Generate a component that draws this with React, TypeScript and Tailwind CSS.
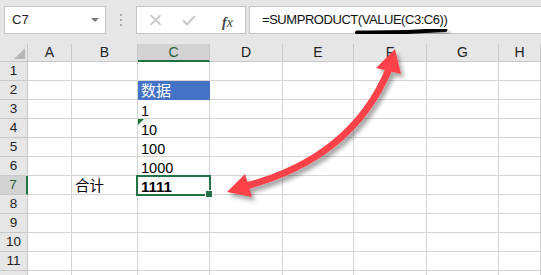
import React from 'react';

const cols = ['A', 'B', 'C', 'D', 'E', 'F', 'G', 'H'];
const rows = [1, 2, 3, 4, 5, 6, 7, 8, 9, 10, 11, 12];

type CellProps = { row: number; col: string };

function Cell({ row, col }: CellProps) {
  const base = 'relative flex items-end leading-none border-r border-b border-[#d4d4d4] px-[3px] text-[14.5px] text-black';

  if (col === 'C' && row === 2) {
    return (
      <div className="relative flex items-end leading-none border-r border-b border-[#4472c4] bg-[#4472c4] px-[3px] pb-[1px] text-[15px] text-white">
        数据
      </div>
    );
  }
  if (col === 'C' && row === 3) return <div className={base}>1</div>;
  if (col === 'C' && row === 4) {
    return (
      <div className={base}>
        <span className="absolute left-0 top-0 w-0 h-0 border-t-[6px] border-r-[6px] border-t-[#1e7b34] border-r-transparent" />
        10
      </div>
    );
  }
  if (col === 'C' && row === 5) return <div className={base}>100</div>;
  if (col === 'C' && row === 6) return <div className={base}>1000</div>;
  if (col === 'C' && row === 7) {
    return (
      <div className={`${base} z-10 font-bold text-[15px]`}>
        1111
        <span className="absolute -left-[2px] -top-[1px] -right-[2px] -bottom-[2px] border-2 border-[#217346]" />
        <span className="absolute -right-[4px] -bottom-[4px] w-[8px] h-[8px] bg-[#217346] border border-white" />
      </div>
    );
  }
  if (col === 'B' && row === 7) {
    return <div className={`${base} pb-[1px] text-[14.5px]`}>合计</div>;
  }
  return <div className={base} />;
}

export default function App() {
  return (
    <div
      className="relative w-[541px] h-[275px] overflow-hidden bg-white"
      style={{ fontFamily: '"Liberation Sans", "Noto Sans CJK SC", sans-serif' }}
    >
      {/* formula bar */}
      <div className="flex items-start h-[44px] bg-[#e6e6e6] pt-[6px]">
        <div className="ml-[4px] w-[102px] h-[28px] bg-white border border-[#c6c6c6] flex items-center justify-between pl-[7px] pr-[6px]">
          <span className="text-[13px] text-[#222]">C7</span>
          <span className="w-0 h-0 border-l-[4px] border-r-[4px] border-t-[4px] border-l-transparent border-r-transparent border-t-[#7a7a7a]" />
        </div>
        <div className="w-[30px] h-[28px] flex flex-col items-center justify-center gap-[3px]">
          <span className="w-[2px] h-[2px] bg-[#a8a8a8]" />
          <span className="w-[2px] h-[2px] bg-[#a8a8a8]" />
          <span className="w-[2px] h-[2px] bg-[#a8a8a8]" />
        </div>
        <div className="relative w-[110px] h-[28px] bg-white border border-[#c6c6c6] flex items-center">
          <svg width="110" height="26" viewBox="0 0 110 26">
            <path d="M14 8 L24 18 M24 8 L14 18" stroke="#c4c4c4" strokeWidth="1.6" fill="none" />
            <path d="M47 13.5 L51 17.5 L59 9" stroke="#c4c4c4" strokeWidth="2" fill="none" />
          </svg>
          <span
            className="absolute left-[85px] top-[5px] text-[14px] italic text-[#444]"
            style={{ fontFamily: '"Liberation Serif", serif' }}
          >
            <span className="font-bold">f</span>x
          </span>
        </div>
        <div className="ml-[3px] flex-1 h-[28px] bg-white border border-r-0 border-[#c6c6c6] flex items-center pl-[12px]">
          <span className="text-[13px] tracking-[-0.45px] text-[#111]">=SUMPRODUCT(VALUE(C3:C6))</span>
        </div>
      </div>

      {/* sheet */}
      <div className="grid grid-cols-[28px_44px_66px_72px_73px_71px_73px_72px_1fr] grid-rows-[18px_repeat(12,19px)]">
        <div className="relative bg-[#e6e6e6] border-r border-b border-[#c8c8c8]">
          <svg className="absolute right-[2px] bottom-[2px]" width="11" height="11" viewBox="0 0 11 11">
            <path d="M11 0 L11 11 L0 11 Z" fill="#b5b5b5" />
          </svg>
        </div>
        {cols.map((c) => (
          <div
            key={c}
            className={
              c === 'C'
                ? 'flex items-center justify-center bg-[#d2d2d2] border-r border-[#c8c8c8] border-b-2 border-b-[#217346] text-[14px] text-[#1e5e3a]'
                : 'flex items-center justify-center bg-[#e6e6e6] border-r border-b border-[#c8c8c8] text-[14px] text-[#222]'
            }
          >
            {c}
          </div>
        ))}
        {rows.map((r) => (
          <React.Fragment key={r}>
            <div
              className={
                r === 7
                  ? 'flex items-center justify-center bg-[#d2d2d2] border-r-2 border-r-[#217346] border-b border-b-[#c8c8c8] text-[13.5px] text-[#1e5e3a]'
                  : 'flex items-center justify-center bg-[#e6e6e6] border-r border-b border-[#c8c8c8] text-[13.5px] text-[#222]'
              }
            >
              {r}
            </div>
            {cols.map((c) => (
              <Cell key={c} row={r} col={c} />
            ))}
          </React.Fragment>
        ))}
      </div>

      {/* annotations */}
      <svg className="absolute left-0 top-0 z-20 pointer-events-none" width="541" height="275" viewBox="0 0 541 275">
        <defs>
          <filter id="shadow" x="-20%" y="-20%" width="140%" height="140%">
            <feDropShadow dx="3" dy="4" stdDeviation="2.2" floodColor="#000" floodOpacity="0.35" />
          </filter>
        </defs>
        <path d="M357 32.5 Q400 33 445.5 30" stroke="#000" strokeWidth="4" strokeLinecap="round" fill="none" filter="url(#shadow)" />
        <g filter="url(#shadow)" fill="#fd4349">
          <path d="M246 186 Q352 158 389 69" stroke="#fd4349" strokeWidth="7" fill="none" />
          <path d="M227 192 L245 174 L252 197 Z" />
          <path d="M395 49 L376 68 L401 74 Z" />
        </g>
      </svg>
    </div>
  );
}
